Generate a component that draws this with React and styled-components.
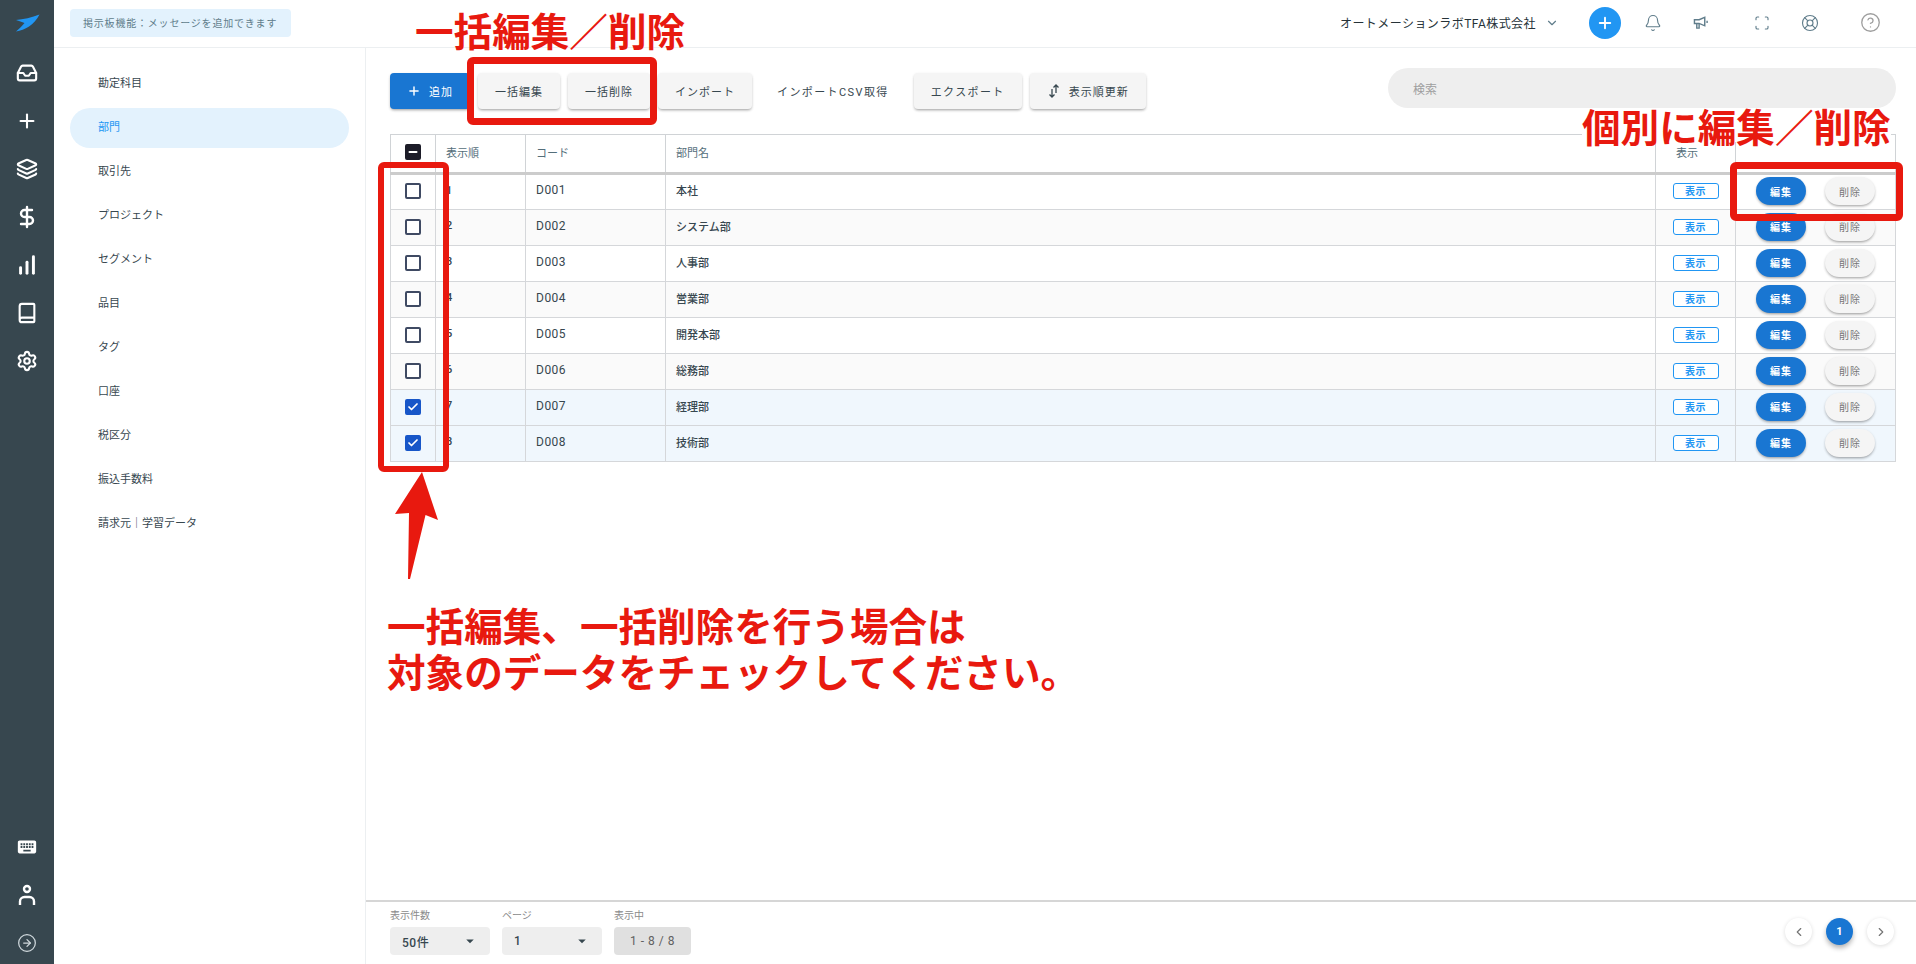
import React from 'react';
import styled, {createGlobalStyle} from 'styled-components';
import {
    Bell, Book, ChartNoAxesColumnIncreasing, Check, ChevronDown, ChevronLeft, ChevronRight,
    CircleArrowRight, CircleHelp, DollarSign, Inbox, Layers, LifeBuoy, Minus, Plus, Scan, Settings
} from 'lucide-react';
import {MdArrowDropDown, MdKeyboard} from 'react-icons/md';

const navItems = ['勘定科目', '部門', '取引先', 'プロジェクト', 'セグメント', '品目', 'タグ', '口座', '税区分', '振込手数料', '請求元｜学習データ'];

const rows = [
    {order: 1, code: 'D001', name: '本社'},
    {order: 2, code: 'D002', name: 'システム部'},
    {order: 3, code: 'D003', name: '人事部'},
    {order: 4, code: 'D004', name: '営業部'},
    {order: 5, code: 'D005', name: '開発本部'},
    {order: 6, code: 'D006', name: '総務部'},
    {order: 7, code: 'D007', name: '経理部', checked: true},
    {order: 8, code: 'D008', name: '技術部', checked: true}
];

const GlobalStyle = createGlobalStyle`
    html, body {
        margin: 0;
        height: 100%;
        background: #fff;
        overflow: hidden;
    }
    * {
        box-sizing: border-box;
    }
    body {
        font-family: Roboto, "Noto Sans CJK JP", sans-serif;
        color: #37474f;
    }
`;

const Page = styled.div`
    position: relative;
    display: flex;
    width: 1916px;
    height: 964px;
`;

const Rail = styled.aside`
    width: 54px;
    flex: none;
    display: flex;
    flex-direction: column;
    align-items: center;
    background: #37474f;
    color: #fff;
`;

const Logo = styled.svg`
    margin-top: 14px;
    width: 26px;
    height: 18px;
    flex: none;
`;

const RailIcons = styled.div`
    margin-top: 17px;
    display: flex;
    flex-direction: column;
    align-items: center;
`;

const RailIcon = styled.div`
    width: 54px;
    height: 48px;
    display: flex;
    align-items: center;
    justify-content: center;
    color: ${props => props.$muted ? '#cfd8dc' : '#fff'};
`;

const RailBottom = styled.div`
    margin-top: auto;
    margin-bottom: -3px;
    display: flex;
    flex-direction: column;
`;

const Main = styled.div`
    flex: 1;
    min-width: 0;
    display: flex;
    flex-direction: column;
`;

const TopBar = styled.header`
    height: 48px;
    flex: none;
    display: flex;
    align-items: center;
    padding: 0 22px 2px 16px;
    border-bottom: 1px solid #eceff1;
`;

const Notice = styled.div`
    width: 221px;
    height: 28px;
    display: flex;
    align-items: center;
    padding-left: 13px;
    border-radius: 4px;
    background: #e3f2fd;
    color: #607d8b;
    font-size: 10px;
    letter-spacing: .8px;
    white-space: nowrap;
`;

const Company = styled.div`
    margin-left: auto;
    display: flex;
    align-items: center;
    gap: 9px;
    margin-right: 30px;
    font-size: 12px;
    letter-spacing: .45px;
    color: #263238;
    white-space: nowrap;
`;

const AddRound = styled.button`
    width: 32px;
    height: 32px;
    margin-right: 8px;
    display: flex;
    align-items: center;
    justify-content: center;
    padding: 0;
    border: 0;
    border-radius: 50%;
    background: #2196f3;
    color: #fff;
`;

const TopIcon = styled.div`
    width: 48px;
    display: flex;
    justify-content: center;
    margin-left: ${props => props.$shift || 0}px;
    color: ${props => props.$grey ? '#9e9e9e' : '#607d8b'};
`;

const Body = styled.div`
    flex: 1;
    min-height: 0;
    display: flex;
`;

const SubNav = styled.nav`
    width: 312px;
    flex: none;
    display: flex;
    flex-direction: column;
    gap: 4px;
    padding: 16px 16px 0;
    border-right: 1px solid #eceff1;
`;

const NavItem = styled.div`
    height: 40px;
    display: flex;
    align-items: center;
    padding: 0 0 4px 28px;
    border-radius: 20px;
    font-size: 11px;
    background: ${props => props.$active ? '#e3f2fd' : 'transparent'};
    color: ${props => props.$active ? '#2196f3' : '#37474f'};
`;

const Content = styled.main`
    flex: 1;
    min-width: 0;
    display: flex;
    flex-direction: column;
`;

const Toolbar = styled.div`
    display: flex;
    align-items: flex-start;
    gap: 8px;
    padding: 20px 20px 0 24px;
`;

const ToolButton = styled.button`
    height: 36px;
    margin-top: 5px;
    display: flex;
    align-items: center;
    gap: 8px;
    padding: 0 17px;
    border: 0;
    border-radius: 4px;
    font-family: inherit;
    font-size: 11px;
    letter-spacing: ${props => props.$wide ? 1.4 : props.$flat ? 1.4 : 1}px;
    white-space: nowrap;
    color: ${props => props.$primary ? '#fff' : '#37474f'};
    background: ${props => props.$primary ? '#1976d2' : props.$flat ? 'transparent' : '#f5f5f5'};
    box-shadow: ${props => props.$flat ? 'none' : '0 2px 3px -1px rgba(0,0,0,.3), 0 1px 3px rgba(0,0,0,.12)'};
`;

const Search = styled.div`
    margin-left: auto;
    width: 508px;
    height: 40px;
    display: flex;
    align-items: center;
    padding-left: 25px;
    border-radius: 20px;
    background: #eeeeee;
    color: #9e9e9e;
    font-size: 12px;
`;

const TableWrap = styled.div`
    flex: 1;
    min-height: 0;
    padding: 25px 20px 0 24px;
`;

const Table = styled.table`
    width: 100%;
    table-layout: fixed;
    border-collapse: collapse;
    border: 1px solid #d0d3d6;
    font-size: 11px;
`;

const HeadCell = styled.th`
    height: 39px;
    padding: 0 0 4px ${props => props.$inset || 10}px;
    text-align: left;
    font-weight: 400;
    color: #546e7a;
    border: 1px solid #d0d3d6;
    border-bottom: 3px solid #cccccc;
`;

const HeadCheckCell = styled(HeadCell)`
    padding: 0 0 3px;
    text-align: center;
`;

const Row = styled.tr`
    height: 36px;
    background: ${props => props.$selected ? '#f0f7fd' : props.$even ? '#fafafa' : '#fff'};
`;

const Cell = styled.td`
    padding: 0 0 4px 10px;
    font-weight: 500;
    border: 1px solid #d5d7da;
`;

const CodeCell = styled(Cell)`
    font-size: 12px;
    font-weight: 400;
    letter-spacing: .5px;
`;

const CentreCell = styled(Cell)`
    padding: 0 0 2px;
    text-align: center;
`;

const CheckBox = styled.span`
    display: inline-flex;
    vertical-align: middle;
    align-items: center;
    justify-content: center;
    width: 16px;
    height: 16px;
    border-radius: 2px;
    color: #fff;
    border: 2px solid ${props => props.$state === 'mixed' ? '#1c1c28' : props.$state === 'on' ? '#1756c8' : '#3f4a63'};
    background: ${props => props.$state === 'mixed' ? '#1c1c28' : props.$state === 'on' ? '#1756c8' : '#fff'};
`;

const Badge = styled.span`
    display: inline-flex;
    vertical-align: middle;
    align-items: center;
    justify-content: center;
    width: 46px;
    height: 16px;
    padding-bottom: 1px;
    border: 1px solid #2196f3;
    border-radius: 3px;
    background: #fff;
    color: #2196f3;
    font-size: 10px;
    font-weight: 700;
    letter-spacing: .5px;
`;

const RowActions = styled.div`
    display: flex;
    justify-content: center;
    gap: 19px;
`;

const PillButton = styled.button`
    width: 50px;
    height: 28px;
    padding: 0;
    border: 0;
    border-radius: 14px;
    font-family: inherit;
    font-size: 10px;
    letter-spacing: 1px;
    font-weight: ${props => props.$primary ? 700 : 400};
    color: ${props => props.$primary ? '#fff' : '#757575'};
    background: ${props => props.$primary ? '#1976d2' : '#f5f5f5'};
    box-shadow: 0 2px 3px -1px rgba(0,0,0,.3), 0 1px 3px rgba(0,0,0,.12);
`;

const Footer = styled.footer`
    height: 64px;
    flex: none;
    display: flex;
    align-items: flex-start;
    gap: 12px;
    padding: 7px 22px 0 24px;
    border-top: 2px solid #d6d6d6;
`;

const Field = styled.div`
    display: flex;
    flex-direction: column;
    gap: 4px;
`;

const FieldLabel = styled.div`
    height: 14px;
    line-height: 14px;
    font-size: 10px;
    color: #8a8a8a;
`;

const SelectBox = styled.div`
    width: ${props => props.$width || 100}px;
    height: 28px;
    display: flex;
    align-items: center;
    justify-content: ${props => props.$readonly ? 'center' : 'space-between'};
    padding: ${props => props.$readonly ? '0' : '0 15px 0 12px'};
    border-radius: 4px;
    background: ${props => props.$readonly ? '#e0e0e0' : '#eeeeee'};
    color: ${props => props.$readonly ? '#616161' : '#37474f'};
    font-size: 12px;
    font-weight: ${props => props.$readonly ? 400 : 500};
    letter-spacing: .5px;
    svg {
        margin-right: -4px;
    }
`;

const Pager = styled.div`
    margin-left: auto;
    margin-top: 9px;
    display: flex;
    gap: 14px;
`;

const PageDot = styled.div`
    width: 27px;
    height: 27px;
    display: flex;
    align-items: center;
    justify-content: center;
    border-radius: 50%;
    font-size: 11px;
    font-weight: 700;
    color: ${props => props.$active ? '#fff' : '#757575'};
    background: ${props => props.$active ? '#1976d2' : '#fff'};
    box-shadow: ${props => props.$active ? '0 3px 5px rgba(0,0,0,.3)' : '0 1px 4px rgba(0,0,0,.14)'};
`;

/* 赤い注釈はスクショの上に重ねる */
const Callout = styled.div`
    position: absolute;
    font-family: "Noto Sans CJK JP", sans-serif;
    font-weight: 700;
    font-size: 38.600px;
    line-height: 46px;
    color: #e8190f;
    white-space: nowrap;
`;

const BulkCallout = styled(Callout)`
    left: 415px;
    top: 6px;
`;

const RowCallout = styled(Callout)`
    left: 1582px;
    top: 108px;
    line-height: 34px;
    background: #fff;
`;

const HintCallout = styled(Callout)`
    left: 387px;
    top: 601px;
`;

const Frame = styled.div`
    position: absolute;
    border: 7px solid #e8190f;
    border-radius: 6px;
`;

const BulkFrame = styled(Frame)`
    left: 467px;
    top: 57px;
    width: 190px;
    height: 68px;
`;

const CheckFrame = styled(Frame)`
    left: 378px;
    top: 162px;
    width: 71px;
    height: 310px;
    border-width: 6px;
`;

const RowFrame = styled(Frame)`
    left: 1730px;
    top: 162px;
    width: 173px;
    height: 59px;
`;

const ArrowMark = styled.svg`
    position: absolute;
    left: 395px;
    top: 472px;
    width: 44px;
    height: 108px;
`;

function PersonIcon() {
    return (
        <svg width="20" height="22" viewBox="0 0 20 22" fill="none" stroke="currentColor" strokeWidth="2.400">
            <circle cx="10" cy="5" r="3"/>
            <path d="M3 21v-3.500a4.500 4.500 0 0 1 4.500-4.500h5a4.500 4.500 0 0 1 4.500 4.500V21"/>
        </svg>
    );
}

function SortIcon() {
    return (
        <svg width="14" height="14" viewBox="0 0 14 14" fill="none" stroke="currentColor" strokeWidth="1.300">
            <path d="M5 5v8M2.500 10.500 5 13l2.500-2.500"/>
            <path d="M9 9V1M6.500 3.500 9 1l2.500 2.500"/>
        </svg>
    );
}

function HornIcon() {
    return (
        <svg width="16" height="15" viewBox="0 0 17 16" fill="none" stroke="currentColor" strokeWidth="1.500">
            <path d="M1.500 5h5l6-2.500v9L6.500 9h-5z"/>
            <path d="M4 9.500V14h2.500V9.500"/>
            <path d="M15 6v2.500"/>
        </svg>
    );
}

function Check3({state}) {
    return (
        <CheckBox $state={state}>
            {state === 'on' && <Check size={12} strokeWidth={3.500}/>}
            {state === 'mixed' && <Minus size={12} strokeWidth={4}/>}
        </CheckBox>
    );
}

export default function App() {
    return (
        <Page>
            <GlobalStyle/>
            <Rail>
                <Logo viewBox="0 0 26 18">
                    <path d="M25.500 .5C18 3.500 9 5.500 2 6c3 1 6 1.800 8.500 3C8 12 5 15 2 17.500c9-1.500 18-6 23.500-17z" fill="#2196f3"/>
                </Logo>
                <RailIcons>
                    <RailIcon><Inbox size={22} strokeWidth={2.300}/></RailIcon>
                    <RailIcon><Plus size={22} strokeWidth={2.300}/></RailIcon>
                    <RailIcon><Layers size={22} strokeWidth={2.300}/></RailIcon>
                    <RailIcon><DollarSign size={24} strokeWidth={2.400}/></RailIcon>
                    <RailIcon><ChartNoAxesColumnIncreasing size={22} strokeWidth={3.200}/></RailIcon>
                    <RailIcon><Book size={22} strokeWidth={2.300}/></RailIcon>
                    <RailIcon><Settings size={22} strokeWidth={2.300}/></RailIcon>
                </RailIcons>
                <RailBottom>
                    <RailIcon><MdKeyboard size={22}/></RailIcon>
                    <RailIcon><PersonIcon/></RailIcon>
                    <RailIcon $muted><CircleArrowRight size={20} strokeWidth={1.500}/></RailIcon>
                </RailBottom>
            </Rail>
            <Main>
                <TopBar>
                    <Notice>掲示板機能：メッセージを追加できます</Notice>
                    <Company>
                        オートメーションラボTFA株式会社
                        <ChevronDown size={14} color="#607d8b"/>
                    </Company>
                    <AddRound><Plus size={18} strokeWidth={2.500}/></AddRound>
                    <TopIcon><Bell size={18} strokeWidth={1.500}/></TopIcon>
                    <TopIcon><HornIcon/></TopIcon>
                    <TopIcon $shift={13}><Scan size={16} strokeWidth={1.700}/></TopIcon>
                    <TopIcon><LifeBuoy size={18} strokeWidth={1.500}/></TopIcon>
                    <TopIcon $shift={12} $grey><CircleHelp size={21} strokeWidth={1.500}/></TopIcon>
                </TopBar>
                <Body>
                    <SubNav>
                        {navItems.map(item => (
                            <NavItem key={item} $active={item === '部門'}>{item}</NavItem>
                        ))}
                    </SubNav>
                    <Content>
                        <Toolbar>
                            <ToolButton $primary><Plus size={14} strokeWidth={2.500}/>追加</ToolButton>
                            <ToolButton>一括編集</ToolButton>
                            <ToolButton>一括削除</ToolButton>
                            <ToolButton>インポート</ToolButton>
                            <ToolButton $flat>インポートCSV取得</ToolButton>
                            <ToolButton $wide>エクスポート</ToolButton>
                            <ToolButton><SortIcon/>表示順更新</ToolButton>
                            <Search>検索</Search>
                        </Toolbar>
                        <TableWrap>
                            <Table>
                                <colgroup>
                                    <col width="45"/>
                                    <col width="90"/>
                                    <col width="140"/>
                                    <col/>
                                    <col width="80"/>
                                    <col width="160"/>
                                </colgroup>
                                <thead>
                                    <tr>
                                        <HeadCheckCell><Check3 state="mixed"/></HeadCheckCell>
                                        <HeadCell>表示順</HeadCell>
                                        <HeadCell>コード</HeadCell>
                                        <HeadCell>部門名</HeadCell>
                                        <HeadCell $inset={20}>表示</HeadCell>
                                        <HeadCell/>
                                    </tr>
                                </thead>
                                <tbody>
                                    {rows.map((row, i) => (
                                        <Row key={row.code} $even={i % 2 === 1} $selected={row.checked}>
                                            <CentreCell><Check3 state={row.checked ? 'on' : 'off'}/></CentreCell>
                                            <Cell>{row.order}</Cell>
                                            <CodeCell>{row.code}</CodeCell>
                                            <Cell>{row.name}</Cell>
                                            <CentreCell><Badge>表示</Badge></CentreCell>
                                            <CentreCell>
                                                <RowActions>
                                                    <PillButton $primary>編集</PillButton>
                                                    <PillButton>削除</PillButton>
                                                </RowActions>
                                            </CentreCell>
                                        </Row>
                                    ))}
                                </tbody>
                            </Table>
                        </TableWrap>
                        <Footer>
                            <Field>
                                <FieldLabel>表示件数</FieldLabel>
                                <SelectBox>50件<MdArrowDropDown size={18}/></SelectBox>
                            </Field>
                            <Field>
                                <FieldLabel>ページ</FieldLabel>
                                <SelectBox>1<MdArrowDropDown size={18}/></SelectBox>
                            </Field>
                            <Field>
                                <FieldLabel>表示中</FieldLabel>
                                <SelectBox $width={77} $readonly>1 - 8 / 8</SelectBox>
                            </Field>
                            <Pager>
                                <PageDot><ChevronLeft size={14}/></PageDot>
                                <PageDot $active>1</PageDot>
                                <PageDot><ChevronRight size={14}/></PageDot>
                            </Pager>
                        </Footer>
                    </Content>
                </Body>
            </Main>
            <BulkFrame/>
            <CheckFrame/>
            <RowFrame/>
            <BulkCallout>一括編集／削除</BulkCallout>
            <RowCallout>個別に編集／削除</RowCallout>
            <ArrowMark viewBox="0 0 44 108">
                <polygon points="27,0 0,42 14,41 13,107 15,107 30.500,43 43,48" fill="#e8190f"/>
            </ArrowMark>
            <HintCallout>一括編集、一括削除を行う場合は<br/>対象のデータをチェックしてください。</HintCallout>
        </Page>
    );
}
